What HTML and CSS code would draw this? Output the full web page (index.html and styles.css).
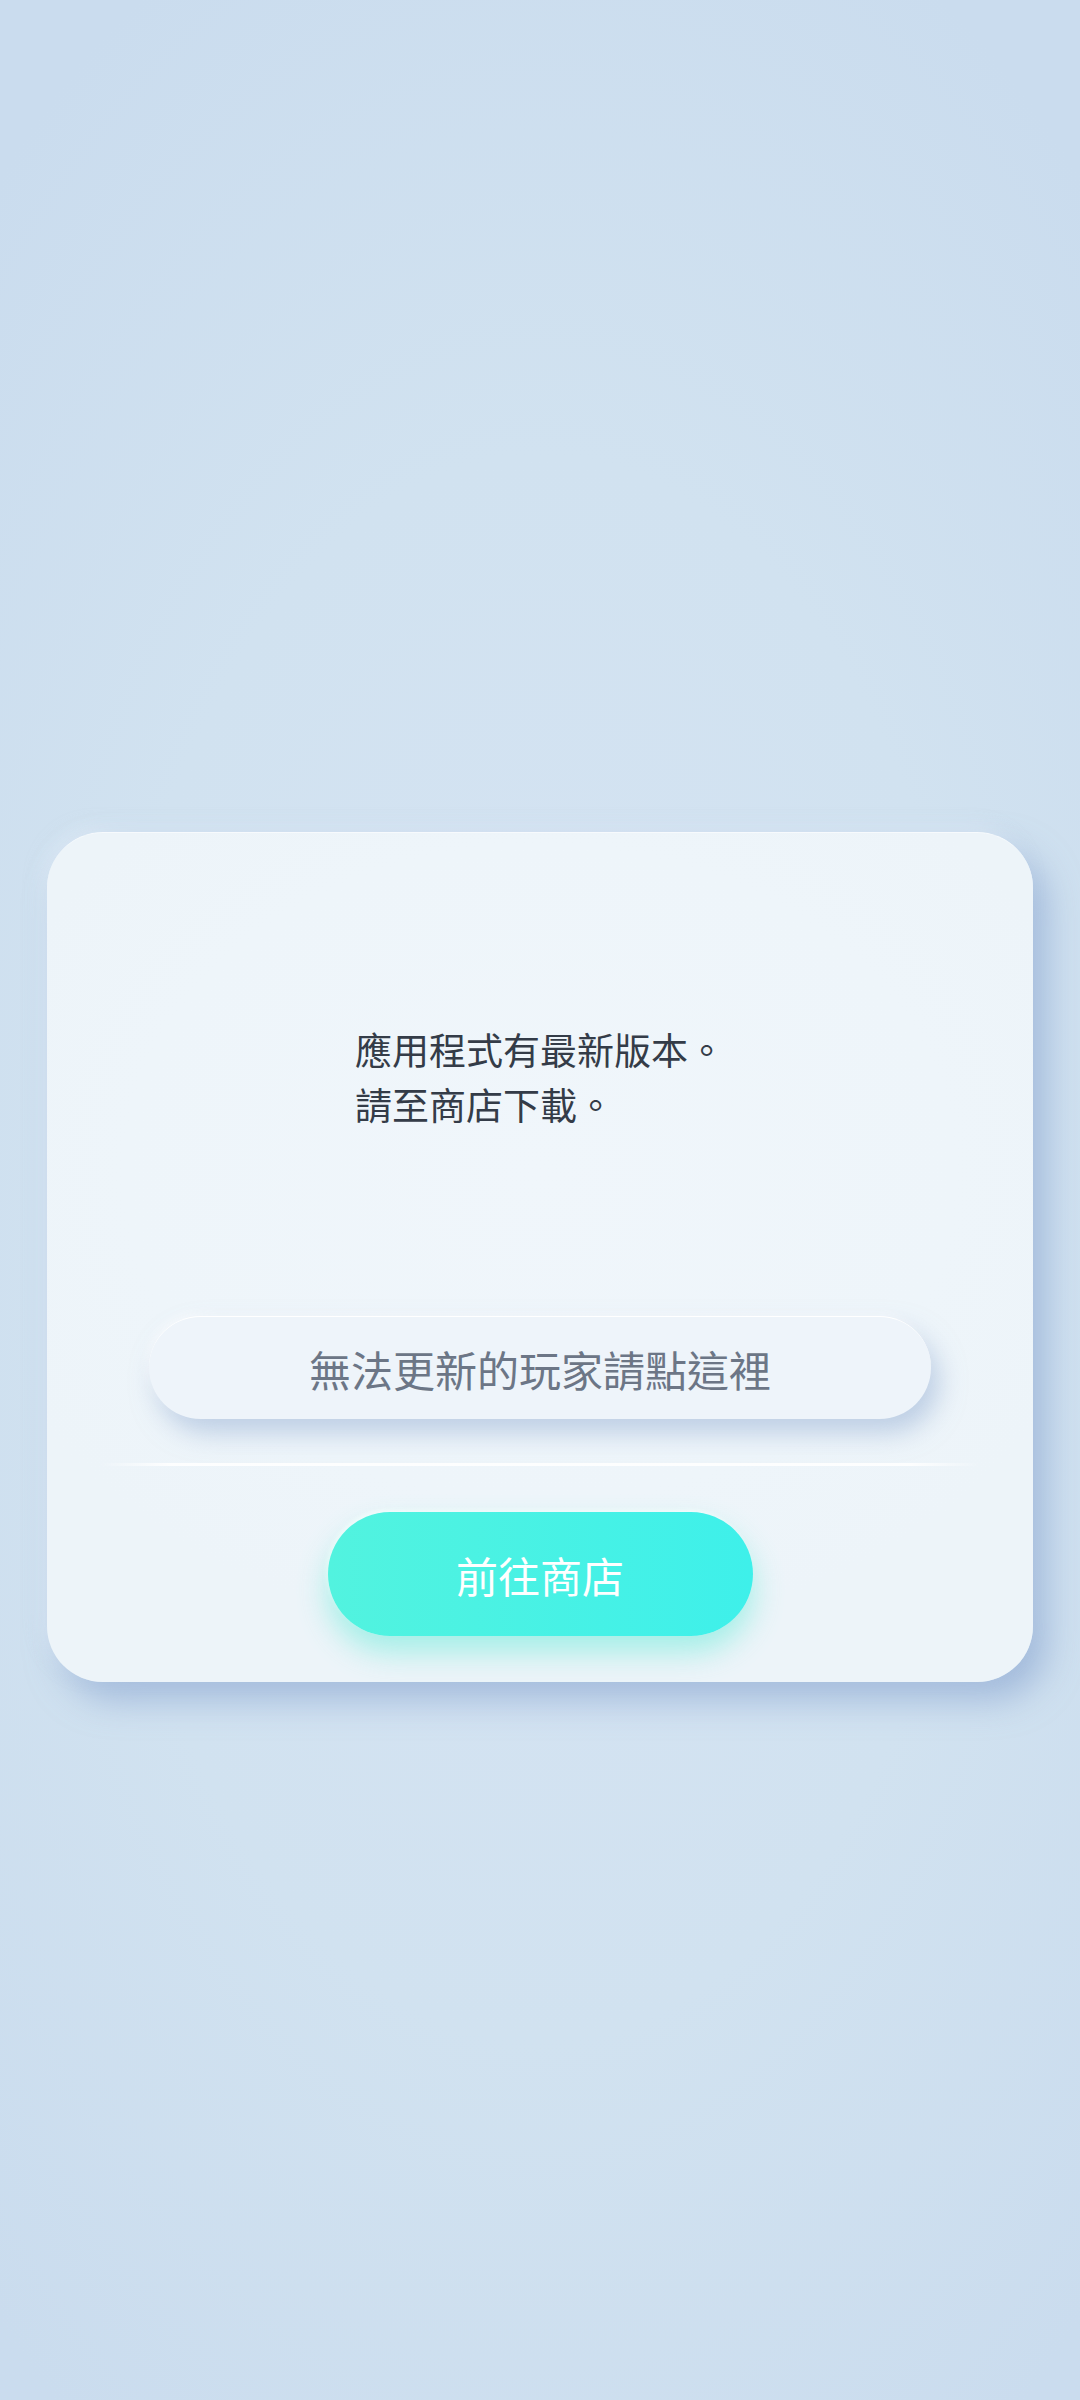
FILE: index.html
```html
<!DOCTYPE html>
<html lang="zh-Hant">
<head>
    <meta charset="UTF-8">
    <meta name="viewport" content="width=device-width, initial-scale=1.0">
    <title>更新</title>
    <link rel="stylesheet" href="styles.css">
</head>
<body>
    <div class="dialog">
        <div class="message">
            <p>應用程式有最新版本。</p>
            <p>請至商店下載。</p>
        </div>

        <button class="btn-soft">無法更新的玩家請點這裡</button>

        <div class="divider"></div>

        <button class="btn-store">前往商店</button>
    </div>
</body>
</html>
```

FILE: styles.css
```css
body {
    margin: 0;
    height: 2400px;
    overflow: hidden;
    font-family: "Noto Sans CJK TC", "Noto Sans", sans-serif;
    background: radial-gradient(ellipse 75% 60% at 50% 52%, #d5e3f3 0%, #d1e2f0 55%, #cadcee 100%);
}

.dialog {
    box-sizing: border-box;
    width: 986px;
    height: 850px;
    margin: 832px 0 0 47px;
    padding-top: 189px;
    display: flex;
    flex-direction: column;
    align-items: center;
    background: radial-gradient(ellipse 60% 55% at 50% 40%, #f0f6fb 0%, #eef5fa 70%, #edf4f9 100%);
    border-radius: 56px;
    border-top: 1px solid #f7fafd;
    box-shadow: 14px 18px 34px rgba(128, 156, 204, 0.55),
                -6px -6px 16px rgba(230, 240, 250, 0.5);
}

.message {
    width: 370px;
    color: #343c48;
    font-size: 37px;
    font-weight: 400;
    line-height: 55px;
}

.message p {
    margin: 0;
}

button {
    font-family: inherit;
    border: none;
    cursor: pointer;
}

.btn-soft {
    width: 782px;
    height: 103px;
    margin-top: 184px;
    border-radius: 52px;
    background: #eef4fa;
    color: #6c7686;
    font-size: 42px;
    border-top: 1px solid #ffffff;
    box-shadow: 8px 14px 26px rgba(150, 174, 212, 0.55),
                -3px -3px 8px rgba(255, 255, 255, 0.6);
}

.divider {
    width: 880px;
    height: 3px;
    margin-top: 44px;
    background: linear-gradient(to right, rgba(255, 255, 255, 0), rgba(255, 255, 255, 0.9) 8%, rgba(255, 255, 255, 0.9) 92%, rgba(255, 255, 255, 0));
}

.btn-store {
    width: 425px;
    height: 124px;
    margin-top: 46px;
    border-radius: 62px;
    background: linear-gradient(to right, #52f3df, #3ef0ea);
    color: #ffffff;
    font-size: 42px;
    box-shadow: 0 16px 30px rgba(70, 232, 208, 0.45),
                -2px -2px 4px rgba(255, 255, 255, 0.8);
}
```
